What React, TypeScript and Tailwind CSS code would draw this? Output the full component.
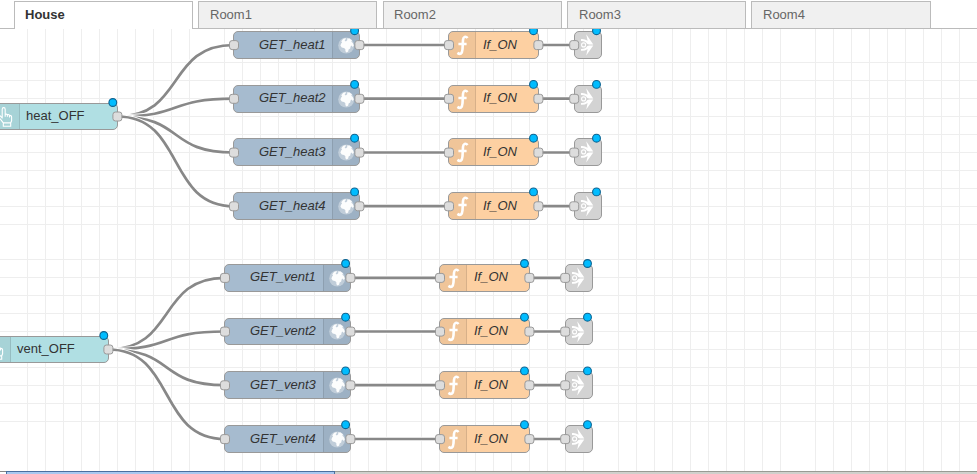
import React from 'react';

const TABS = [
  { name: 'House', style: 'w-[179px] h-[28px] bg-white font-bold text-[#333] pl-[10px]' },
  { name: 'Room1', style: 'w-[179px] h-[27px] bg-[#f0f0f0] text-[#666] pl-[11px]' },
  { name: 'Room2', style: 'ml-px w-[179px] h-[27px] bg-[#f0f0f0] text-[#666] pl-[10px]' },
  { name: 'Room3', style: 'w-[179px] h-[27px] bg-[#f0f0f0] text-[#666] pl-[11px]' },
  { name: 'Room4', style: 'w-[180px] h-[27px] bg-[#f0f0f0] text-[#666] pl-[11px]' },
];

// All canvas coordinates share the window origin; the canvas itself starts at TOP.
const TOP = 29;

type Row = { top: number; height: number; center: number };
type Group = { name: string; label: string; dx: number; inY: number; inRight: number; rows: Row[] };

const GROUPS: Group[] = [
  {
    name: 'heat', label: 'heat_OFF', dx: 0, inY: 116.5, inRight: 118,
    rows: [
      { top: 31, height: 28, center: 45 },
      { top: 85, height: 28, center: 98.7 },
      { top: 138, height: 28, center: 152.5 },
      { top: 192, height: 28, center: 206.2 },
    ],
  },
  {
    name: 'vent', label: 'vent_OFF', dx: -9, inY: 349.5, inRight: 109,
    rows: [
      { top: 264, height: 28, center: 277.8 },
      { top: 318, height: 27, center: 331.5 },
      { top: 371, height: 28, center: 385.2 },
      { top: 425, height: 28, center: 439 },
    ],
  },
];

const range = (start: number) => Array.from({ length: 10 }, (_, i) => start + i * 18);
const COLS = [27, 224, 421, 618, 815].flatMap(range);
const LINES = [62, 259].flatMap(range);

function Grid() {
  return (
    <g fill="#eee">
      {COLS.map((x) => <rect key={x} x={x} y={TOP} width="1" height="442" />)}
      {LINES.map((y) => <rect key={y} x="0" y={y} width="977" height="1" />)}
    </g>
  );
}

function Wire({ d }: { d: string }) {
  return (
    <g fill="none">
      <path d={d} stroke="#fff" strokeWidth="4.6" />
      <path d={d} stroke="#888" strokeWidth="2.7" />
    </g>
  );
}

function Wires() {
  return (
    <svg className="absolute inset-0" width="977" height="442" viewBox="0 29 977 442">
      <Grid />
      {GROUPS.map((g) => {
        const sx = g.inRight - 0.5;
        const tx = 233.7 + g.dx;
        return (
          <g key={g.name}>
            {g.rows.map((r) => (
              <g key={r.top}>
                <Wire d={`M${sx} ${g.inY} C${sx + 67.2} ${g.inY} ${tx - 67.2} ${r.center} ${tx} ${r.center}`} />
                <Wire d={`M${359 + g.dx} ${r.center} H${449 + g.dx}`} />
                <Wire d={`M${538 + g.dx} ${r.center} H${574 + g.dx}`} />
              </g>
            ))}
          </g>
        );
      })}
    </svg>
  );
}

// Connection ports and the unsaved-change dots that sit over the nodes.
function Overlays() {
  const port = (x: number, y: number) => (
    <rect key={`p${x}-${y}`} x={x - 4.5} y={y - 4.5} width="9" height="9" rx="2.6" fill="#ddd" stroke="#999" strokeWidth="1" />
  );
  const dot = (x: number, y: number) => (
    <circle key={`d${x}-${y}`} cx={x} cy={y} r="3.9" fill="#00bcff" stroke="#0f6390" strokeWidth="1.1" />
  );
  return (
    <svg className="absolute inset-0" width="977" height="442" viewBox="0 29 977 442">
      {GROUPS.map((g) => (
        <g key={g.name}>
          {port(g.inRight - 0.6, g.inY)}
          {dot(g.inRight - 5.2, g.inY - 14)}
          {g.rows.map((r) => {
            const cy = r.center + 0.1;
            return (
              <g key={r.top}>
                {[234, 359.4, 449, 538.4, 574.2].map((x) => port(x + g.dx, cy))}
                {[354.6, 533.5, 596.5].map((x) => dot(x + g.dx, r.center - 14.3))}
              </g>
            );
          })}
        </g>
      ))}
    </svg>
  );
}

function GlobeIcon() {
  return (
    <svg className="ml-[5px] shrink-0" width="17" height="17" viewBox="0 0 17 17">
      <circle cx="8.2" cy="8.5" r="8" fill="#fff" fillOpacity=".36" />
      <path fill="#fff" fillOpacity=".95" d="M3.2 6.6 4.2 4.9 3.1 4.4 5 2.1 7.4.9 8 2.1 6.6 3.3 7.8 4.5 9.4 3 8.9 1.4 11.6 1.5 14 3.4 13.3 4.8 14.8 6 15.8 8.4 14.6 10 13.6 8.6 12.6 9.4 12.2 11.4 10.6 12.6 10.2 14.6 8.6 15.6 7.4 14.2 7.3 12 5.9 10.9 3.7 10.6 2.4 8.6z" />
    </svg>
  );
}

function FunctionIcon() {
  return (
    <svg className="ml-[7px] shrink-0" width="14" height="23" viewBox="0 0 14 23">
      <path d="M11.6 4 C9.6 1.7 7.3 2.6 7 5.8 L6.5 15.3 C6.2 20 4.2 20.8 1.4 18.9 M2.4 10 H10.6" fill="none" stroke="#fff" strokeWidth="2.6" />
    </svg>
  );
}

function LinkIcon() {
  return (
    <svg className="ml-[5px] shrink-0" width="16" height="24" viewBox="0 0 16 24">
      <path fill="#fff" d="M6.2 1.2 13.3 11.4H9.2L7.4 10.9Q5.4 7.6 1 7.9V6Q4.6 5.6 7.6 7.8zM6.2 22.6 13.3 12.4H9.2L7.4 12.9Q5.4 16.2 1 15.9v1.9Q4.6 18.2 7.6 16z" />
      <circle cx="3.6" cy="11.9" r="2" fill="none" stroke="#fff" strokeWidth="1.1" />
    </svg>
  );
}

function HandIcon() {
  return (
    <svg className="ml-[14px] shrink-0" width="16" height="22" viewBox="0 0 16 22">
      <path d="M5.2 12.6V3.4q0-1.8 1.5-1.8t1.5 1.8v5q1.2-.8 2.2.3 1.3-.5 2.1.7 2.1-.2 2.1 1.6v3.8l-.9 2.1H6.3L4 13.8 1 10.8q.2-1.9 2-1.1l2.2 2.1M6.3 16.9h7.4v3.3H6.3zM8.2 8.4v2.4M10.4 8.8v2M12.5 9.6v1.8" fill="none" stroke="#fff" strokeWidth="1.1" />
    </svg>
  );
}

const nodeBox = 'absolute flex items-stretch overflow-hidden rounded-[5px] border border-[#999]';
const labelText = 'whitespace-pre text-[13px] leading-[16px] text-[#333]';

function NodeRow({ name, dx, row }: { name: string; dx: number; row: Row }) {
  const top = row.top - TOP;
  const paddingTop = Math.floor(row.center + 4) - row.top - 13;
  return (
    <>
      <div className={`${nodeBox} w-[127px] bg-[#a6bbcf]`} style={{ left: 233 + dx, top, height: row.height }}>
        <span className={`${labelText} flex-1 pl-[25px] italic`} style={{ paddingTop }}>{name}</span>
        <div className="flex w-[27px] items-center border-l border-black/10 bg-black/5"><GlobeIcon /></div>
      </div>
      <div className={`${nodeBox} w-[91px] bg-[#fdd0a2]`} style={{ left: 448 + dx, top, height: row.height }}>
        <div className="flex w-[27px] items-center border-r border-black/10 bg-black/5"><FunctionIcon /></div>
        <span className={`${labelText} pl-[7px] italic`} style={{ paddingTop }}>If_ON</span>
      </div>
      <div className={`${nodeBox} w-[28px] bg-[#d3d3d3]`} style={{ left: 574 + dx, top, height: row.height }}>
        <div className="flex items-center"><LinkIcon /></div>
      </div>
    </>
  );
}

function InputNode({ group }: { group: Group }) {
  const top = Math.floor(group.inY - 13.5) - TOP;
  return (
    <div className={`${nodeBox} h-[27px] w-[136px] bg-[#b0dfe3]`} style={{ left: group.inRight - 136, top }}>
      <div className="flex w-[37px] items-center border-r border-black/10 bg-black/5"><HandIcon /></div>
      <span className={`${labelText} pl-[6px] pt-[4px]`}>{group.label}</span>
    </div>
  );
}

export default function App() {
  return (
    <div className="flex h-[474px] w-[977px] flex-col overflow-hidden bg-white font-['Liberation_Sans',Arial,sans-serif]">
      <div className="flex h-[29px] shrink-0 items-start gap-[5px] bg-[linear-gradient(#bbb,#bbb)] bg-[length:100%_1px] bg-bottom bg-no-repeat pl-[14px] pt-px">
        {TABS.map((t) => (
          <div key={t.name} className={`shrink-0 border-x border-t border-[#bbb] pt-[4px] text-[13px] leading-[18px] ${t.style}`}>
            {t.name}
          </div>
        ))}
      </div>
      <div className="relative h-[442px] shrink-0 overflow-hidden">
        <Wires />
        {GROUPS.map((g) => (
          <React.Fragment key={g.name}>
            <InputNode group={g} />
            {g.rows.map((r, i) => (
              <NodeRow key={r.top} name={`GET_${g.name}${i + 1}`} dx={g.dx} row={r} />
            ))}
          </React.Fragment>
        ))}
        <Overlays />
      </div>
      <div className="flex h-[3px] shrink-0">
        <div className="w-[6px] border-t border-[#888]" />
        <div className="w-[329px] border-x border-t border-[#4a6f9f] bg-[#a8c8f0]" />
        <div className="flex-1 border-t border-[#999b94] bg-[#d0d0cc]" />
      </div>
    </div>
  );
}
